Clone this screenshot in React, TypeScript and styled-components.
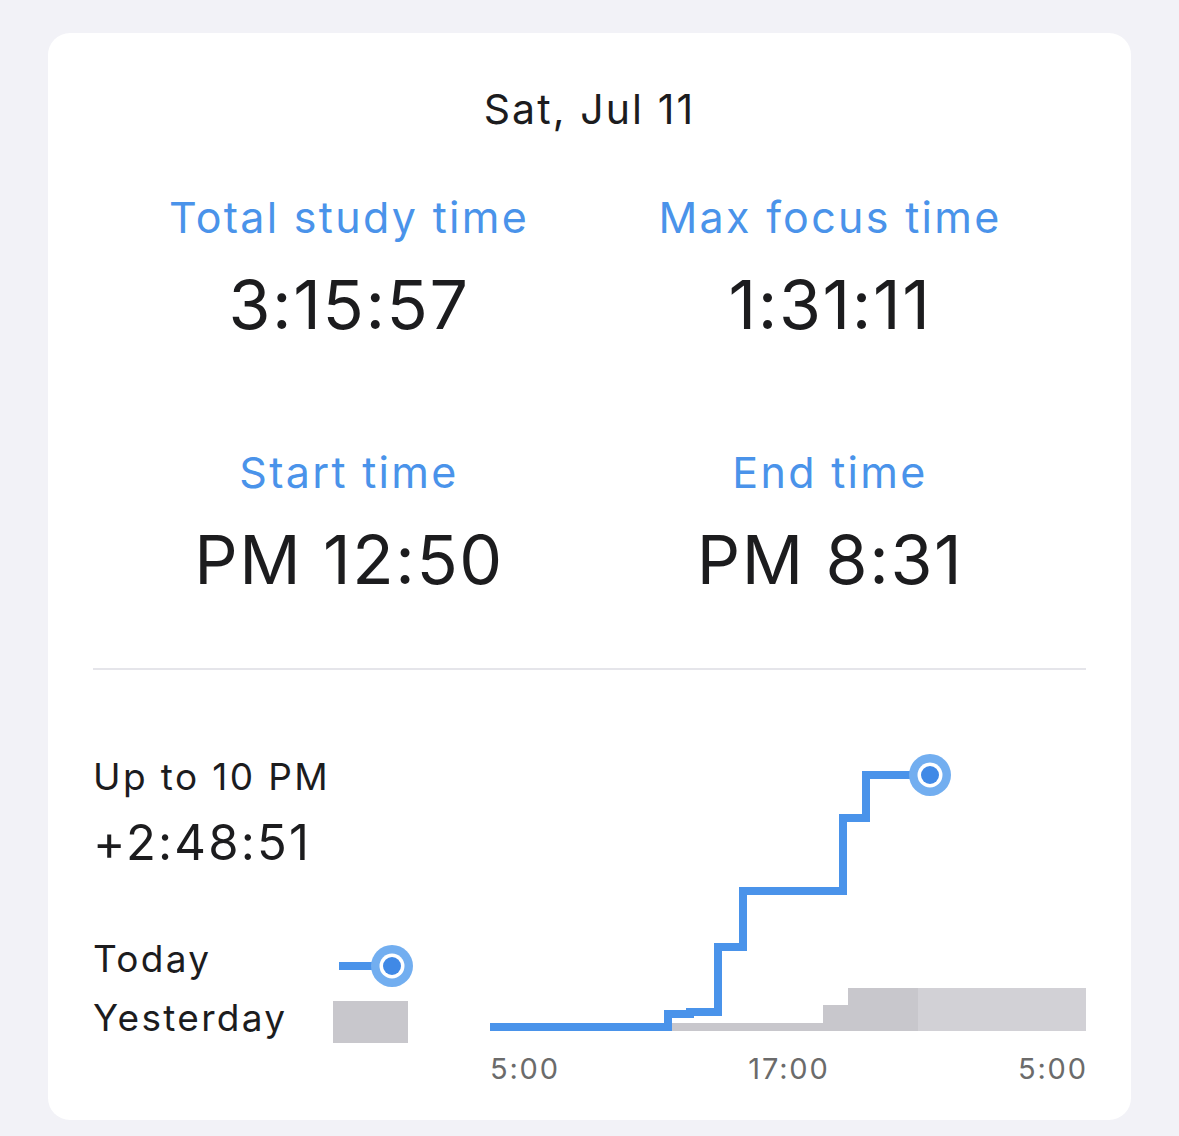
import styled, { createGlobalStyle } from "styled-components";

const GlobalStyle = createGlobalStyle`
  html,
  body {
    margin: 0;
    padding: 0;
    background: #f2f2f7;
  }

  body {
    font-family: Inter, "Noto Sans", sans-serif;
    color: #1c1c1e;
    -webkit-font-smoothing: antialiased;
  }
`;

const BLUE = "#4a93ea";
const BLUE_HALO = "#72aef0";
const BLUE_DOT = "#4089e6";
const GRAY_PAST = "#c8c7cc";
const GRAY_AHEAD = "#d2d1d6";

const Page = styled.div`
  box-sizing: border-box;
  min-height: 1136px;
  padding: 33px 48px 16px;
`;

const Card = styled.div`
  box-sizing: border-box;
  height: 1087px;
  padding: 52px 45px 0;
  background: #ffffff;
  border-radius: 22px;
`;

const DateTitle = styled.h2`
  margin: 0;
  font-size: 41px;
  font-weight: 400;
  line-height: 48px;
  letter-spacing: 2.1px;
  text-align: center;
`;

const StatsGrid = styled.div`
  display: grid;
  grid-template-columns: repeat(2, 481px);
  justify-content: center;
  row-gap: 102px;
  margin-top: 58px;
`;

const Stat = styled.div`
  display: flex;
  flex-direction: column;
  align-items: center;
  gap: 21px;
`;

const StatLabel = styled.span`
  font-size: 43px;
  line-height: 52px;
  letter-spacing: 2.3px;
  color: ${BLUE};
`;

const StatValue = styled.span`
  font-size: 68px;
  line-height: 80px;
  letter-spacing: 1.6px;
`;

const Divider = styled.hr`
  margin: 69px 0 0;
  height: 2px;
  border: 0;
  background: #e5e5ea;
`;

const Bottom = styled.div`
  display: flex;
`;

const Summary = styled.div`
  display: flex;
  flex-direction: column;
  width: 397px;
  padding-top: 85px;
`;

const SummaryCaption = styled.span`
  font-size: 37px;
  line-height: 44px;
  letter-spacing: 2.4px;
`;

const SummaryValue = styled.span`
  margin-top: 15px;
  font-size: 49px;
  line-height: 58px;
  letter-spacing: 2.2px;
`;

const Legend = styled.div`
  display: flex;
  flex-direction: column;
  gap: 15px;
  margin-top: 65px;
`;

const LegendRow = styled.div`
  display: flex;
  align-items: flex-start;
`;

const LegendLabel = styled.span`
  width: 240px;
  font-size: 37px;
  line-height: 44px;
  letter-spacing: 2.3px;
`;

const Swatch = styled.svg`
  display: block;
  overflow: visible;
`;

const ChartColumn = styled.div`
  display: flex;
  flex: 1;
  flex-direction: column;
`;

const ChartSvg = styled.svg`
  display: block;
  overflow: visible;
`;

const AxisRow = styled.div`
  display: flex;
  justify-content: space-between;
  margin-top: 1px;
  font-size: 29px;
  line-height: 34px;
  letter-spacing: 1.8px;
  color: #6b6b6b;

  span:last-child {
    margin-right: -1.8px;
  }
`;

const stats = [
  { label: "Total study time", value: "3:15:57" },
  { label: "Max focus time", value: "1:31:11" },
  { label: "Start time", value: "PM 12:50" },
  { label: "End time", value: "PM 8:31" },
];

// cumulative study time, drawn as a step line (chart px)
const todayPath = "M0,357 H178 V344 H200 V342 H228 V277 H253 V221 H353 V148 H376 V105 H440";

const EndMarker = ({ cx, cy }: { cx: number; cy: number }) => (
  <>
    <circle cx={cx} cy={cy} r={21} fill={BLUE_HALO} />
    <circle cx={cx} cy={cy} r={12.5} fill="#ffffff" />
    <circle cx={cx} cy={cy} r={9} fill={BLUE_DOT} />
  </>
);

const StudyChart = () => (
  <ChartColumn>
    <ChartSvg width={596} height={381} viewBox="0 0 596 381">
      <path d="M0,353 H333 V335 H358 V318 H428 V361 H0 Z" fill={GRAY_PAST} />
      <rect x={428} y={318} width={168} height={43} fill={GRAY_AHEAD} />
      <path d={todayPath} fill="none" stroke={BLUE} strokeWidth={8} strokeLinejoin="miter" />
      <EndMarker cx={440} cy={105} />
    </ChartSvg>
    <AxisRow>
      <span>5:00</span>
      <span>17:00</span>
      <span>5:00</span>
    </AxisRow>
  </ChartColumn>
);

const App = () => {
  return (
    <>
      <GlobalStyle />
      <Page>
        <Card>
          <DateTitle>Sat, Jul 11</DateTitle>
          <StatsGrid>
            {stats.map((s) => (
              <Stat key={s.label}>
                <StatLabel>{s.label}</StatLabel>
                <StatValue>{s.value}</StatValue>
              </Stat>
            ))}
          </StatsGrid>
          <Divider />
          <Bottom>
            <Summary>
              <SummaryCaption>Up to 10 PM</SummaryCaption>
              <SummaryValue>+2:48:51</SummaryValue>
              <Legend>
                <LegendRow>
                  <LegendLabel>Today</LegendLabel>
                  <Swatch width={82} height={44} viewBox="0 0 82 44">
                    <line x1={6} y1={29} x2={53} y2={29} stroke={BLUE} strokeWidth={8} />
                    <EndMarker cx={59} cy={29} />
                  </Swatch>
                </LegendRow>
                <LegendRow>
                  <LegendLabel>Yesterday</LegendLabel>
                  <Swatch width={82} height={44} viewBox="0 0 82 44">
                    <rect x={0} y={5} width={75} height={42} fill={GRAY_PAST} />
                  </Swatch>
                </LegendRow>
              </Legend>
            </Summary>
            <StudyChart />
          </Bottom>
        </Card>
      </Page>
    </>
  );
};

export default App;
